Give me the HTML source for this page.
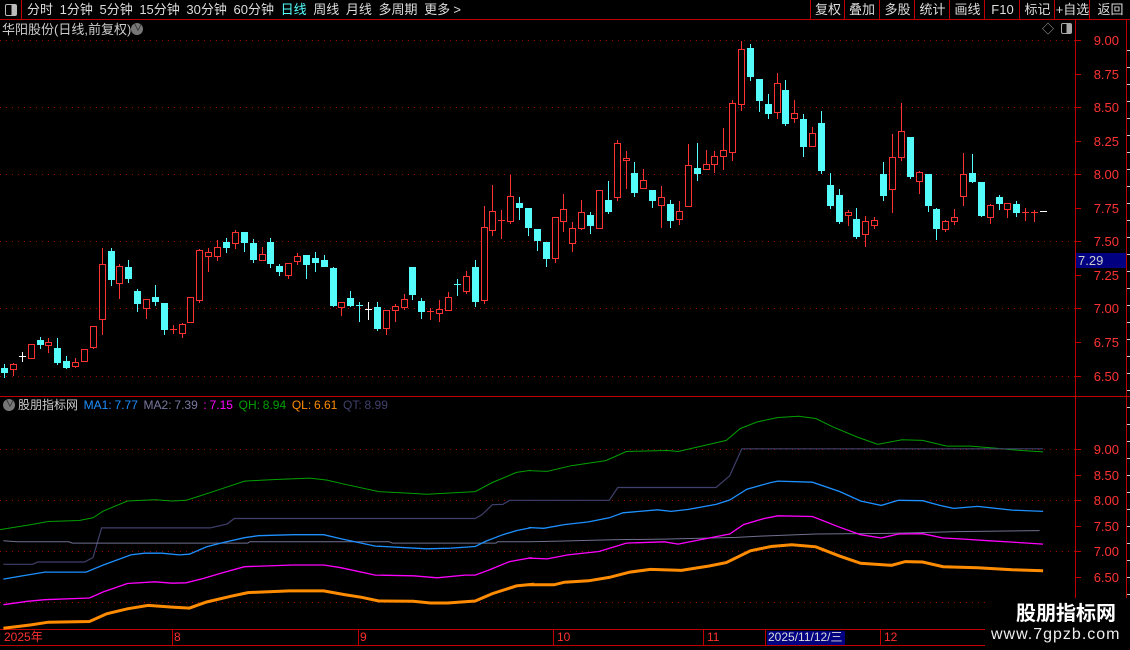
<!DOCTYPE html>
<html><head><meta charset="utf-8">
<style>
html,body{margin:0;padding:0;background:#000;width:1130px;height:650px;overflow:hidden;font-family:"Liberation Sans","Noto Sans CJK SC",sans-serif;}
.t{position:absolute;white-space:nowrap;font-size:13px;line-height:15px;}
#bar{position:absolute;left:0;top:0;width:1130px;height:19px;border-bottom:1px solid #c00000;}
.btn{position:absolute;top:0;height:19px;border-left:1px solid #c00000;color:#ddd;font-size:13px;line-height:19px;text-align:center;}
</style></head><body>
<div id="bar"></div>
<div style="position:absolute;left:0;top:0;width:21px;height:19px;border-right:1px solid #c00000"></div>
<div style="position:absolute;left:5px;top:4px;width:10px;height:10px;border:1px solid #bbb;border-radius:2px;background:linear-gradient(90deg,#000 55%,#bbb 55%)"></div>
<div class="t" style="left:27px;top:2px;color:#ddd;word-spacing:-0.3px">分时&nbsp; 1分钟&nbsp; 5分钟&nbsp; 15分钟&nbsp; 30分钟&nbsp; 60分钟&nbsp; <span style="color:#55ffff">日线</span>&nbsp; 周线&nbsp; 月线&nbsp; 多周期&nbsp; 更多 &gt;</div>
<div class="btn" style="left:810px;width:34px">复权</div>
<div class="btn" style="left:844px;width:34px">叠加</div>
<div class="btn" style="left:879px;width:35px">多股</div>
<div class="btn" style="left:914px;width:35px">统计</div>
<div class="btn" style="left:949px;width:35px">画线</div>
<div class="btn" style="left:984px;width:35px">F10</div>
<div class="btn" style="left:1019px;width:35px">标记</div>
<div class="btn" style="left:1054px;width:35px">+自选</div>
<div class="btn" style="left:1089px;width:41px">返回</div>
<div class="t" style="left:2px;top:22px;color:#ccc">华阳股份(日线,前复权)</div>
<div style="position:absolute;left:131px;top:23px;width:12px;height:12px;border-radius:50%;background:#777"></div>
<div class="t" style="left:133px;top:21px;color:#222;font-size:10px">∨</div>
<div class="t" style="left:1042px;top:22px;color:#aaa;font-size:12px">◇</div>
<div style="position:absolute;left:1061px;top:23px;width:9px;height:9px;border:1px solid #aaa;border-radius:2px;background:linear-gradient(90deg,#000 50%,#aaa 50%)"></div>

<svg id="sv" width="1130" height="650" style="position:absolute;left:0;top:0" xmlns="http://www.w3.org/2000/svg"></svg>

<div style="position:absolute;left:3px;top:399px;width:12px;height:12px;border-radius:50%;background:#777"></div>
<div class="t" style="left:5px;top:397px;color:#222;font-size:10px">∨</div>
<div class="t" style="left:18px;top:398px;color:#ccc;font-size:12px;word-spacing:-0.5px">股朋指标网&nbsp; <span style="color:#1e90ff">MA1: 7.77</span>&nbsp; <span style="color:#7878a0">MA2: 7.39</span>&nbsp; <span style="color:#ff00ff">: 7.15</span>&nbsp; <span style="color:#00a000">QH: 8.94</span>&nbsp; <span style="color:#ff8c00">QL: 6.61</span>&nbsp; <span style="color:#40406c">QT: 8.99</span></div>

<div style="position:absolute;left:1076px;top:253px;width:50px;height:15px;background:#000080"></div>
<div class="t" style="left:1078px;top:253px;color:#ccc;font-size:13px">7.29</div>

<div style="position:absolute;left:767px;top:631px;width:78px;height:14px;background:#000080"></div>
<div class="t" style="left:768px;top:630px;color:#ddd;font-size:12px">2025/11/12/三</div>
<div class="t" style="left:4px;top:630px;color:#ff3030;font-size:12px">2025年</div>
<div class="t" style="left:174px;top:630px;color:#ff3030;font-size:12px">8</div>
<div class="t" style="left:360px;top:630px;color:#ff3030;font-size:12px">9</div>
<div class="t" style="left:557px;top:630px;color:#ff3030;font-size:12px">10</div>
<div class="t" style="left:707px;top:630px;color:#ff3030;font-size:12px">11</div>
<div class="t" style="left:884px;top:630px;color:#ff3030;font-size:12px">12</div>

<div style="position:absolute;left:985px;top:598px;width:145px;height:52px;background:#000"></div>
<div class="t" style="left:1016px;top:602px;color:#fff;font-size:20px;line-height:24px;font-weight:bold">股朋指标网</div>
<div class="t" style="left:991px;top:626px;color:#eee;font-size:16px;line-height:18px;letter-spacing:1px">www.7gpzb.com</div>

<script>
var sv=document.getElementById("sv"),h="";
function ln(x1,y1,x2,y2,c,w,d){h+='<line x1="'+x1+'" y1="'+y1+'" x2="'+x2+'" y2="'+y2+'" stroke="'+c+'" stroke-width="'+(w||1)+'"'+(d?' stroke-dasharray="'+d+'"':'')+'/>';}
function tx(x,y,s,c){h+='<text x="'+x+'" y="'+y+'" fill="'+c+'" font-size="13" font-family="Liberation Sans,sans-serif" text-anchor="end">'+s+'</text>';}
[40,107,174,241,308,376].forEach(function(y){ln(0,y+.5,1075,y+.5,"#a00000",1,"1 5");});
[449,500,551,602].forEach(function(y){ln(0,y+.5,1075,y+.5,"#a00000",1,"1 5");});
var ml=[["9.00",40],["8.75",74],["8.50",107],["8.25",141],["8.00",174],["7.75",208],["7.50",241],["7.25",275],["7.00",308],["6.75",342],["6.50",376]];
ml.forEach(function(a){tx(1119,a[1]+5,a[0],"#ff3333");ln(1076,a[1]+.5,1081,a[1]+.5,"#c00000");});
var ll=[["9.00",449],["8.50",475],["8.00",500],["7.50",526],["7.00",551],["6.50",577],["6.00",602]];
ll.forEach(function(a){tx(1119,a[1]+5,a[0],"#ff3333");ln(1076,a[1]+.5,1081,a[1]+.5,"#c00000");});
for(var y=50;y<620;y+=17){ln(1127,y+.5,1130,y+.5,"#ccc");}
ln(1075.5,20,1075.5,630,"#c00000");ln(1126.5,20,1126.5,650,"#c00000");
ln(0,396.5,1130,396.5,"#c00000");
ln(0,629.5,1130,629.5,"#c00000");ln(0,645.5,1130,645.5,"#c00000");
[172,358,553,703,765,880].forEach(function(x){ln(x+.5,630,x+.5,646,"#c00000");});
var C=[["c",368,372,364,377],["r",364,369,363,375],["w",356,356,352,361],["r",344,358,344,358],["c",340,344,337,348],["r",342,345,338,352],["c",348,362,338,364],["c",361,367,356,368],["r",362,366,358,367],["r",349,361,349,361],["r",326,347,326,348],["r",264,319,248,334],["c",251,279,248,285],["r",266,283,264,298],["c",267,278,260,282],["c",291,303,289,311],["r",299,308,299,318],["c",297,301,285,305],["c",303,329,303,334],["r",329,329,325,333],["r",324,333,323,337],["r",297,322,297,322],["r",250,300,249,302],["r",252,256,248,271],["r",247,256,240,260],["c",242,247,238,252],["r",232,243,230,248],["c",232,242,232,251],["c",243,259,239,262],["r",254,260,247,260],["c",242,263,238,267],["c",266,271,264,275],["r",263,275,263,278],["r",256,261,253,264],["c",255,264,255,278],["c",258,262,252,271],["c",260,266,255,266],["c",268,305,267,306],["r",302,307,302,315],["c",298,305,291,306],["c",305,305,302,321],["w",309,309,302,319],["c",307,328,302,330],["r",310,328,310,334],["r",306,310,304,321],["r",299,307,294,309],["c",267,294,267,299],["c",301,311,298,318],["r",311,311,308,319],["r",309,313,300,321],["r",297,310,292,310],["c",284,284,279,295],["r",276,291,271,293],["c",267,301,260,306],["r",227,300,206,303],["r",211,230,185,235],["r",220,220,210,238],["r",196,221,175,223],["c",203,207,197,219],["c",208,227,208,235],["c",229,240,229,250],["c",242,258,242,266],["r",217,258,217,262],["r",209,221,194,231],["r",228,243,222,251],["r",212,228,200,229],["c",215,225,212,233],["r",190,228,190,228],["c",200,211,181,213],["r",143,197,140,200],["r",158,160,151,188],["c",173,192,162,196],["r",180,188,169,188],["c",190,200,190,207],["r",197,205,186,227],["c",204,220,200,227],["r",211,219,201,224],["r",165,206,144,206],["c",168,173,143,180],["r",164,169,150,169],["r",156,164,151,172],["r",150,156,128,169],["r",103,152,100,160],["r",49,104,41,110],["c",48,76,44,80],["c",79,100,79,111],["c",104,113,94,118],["r",83,112,73,118],["c",90,123,80,125],["r",113,118,100,122],["c",119,146,114,156],["r",133,146,127,146],["c",123,170,111,173],["c",185,205,173,208],["c",195,221,189,223],["r",212,215,210,225],["c",219,236,208,238],["r",221,234,216,246],["r",220,225,217,228],["c",174,195,162,200],["r",157,189,134,212],["r",131,157,103,160],["c",137,176,137,178],["r",172,181,171,193],["c",174,205,174,211],["c",209,228,208,239],["r",221,229,220,231],["r",217,221,209,224],["r",174,196,153,205],["c",173,181,154,182],["c",182,215,182,216],["r",205,217,204,223],["c",197,203,195,209],["r",203,209,203,217],["c",204,212,201,216],["r",212,212,208,220],["r",212,212,210,221],["w",211,211,211,211]];
C.forEach(function(d,i){var x=Math.round(4+8.88*i);var col=d[0]=="r"?"#ff3232":d[0]=="c"?"#54fcfc":"#ffffff";
 if(d[3]<d[1]||d[4]>d[2]) ln(x+.5,d[3],x+.5,d[4]+1,col);
 var hgt=d[2]-d[1];
 if(hgt<2){ln(x-3,d[1]+.5,x+4,d[1]+.5,col,hgt<1?1:2);}
 else if(d[0]=="r"){h+='<rect x="'+(x-2.5)+'" y="'+(d[1]+.5)+'" width="6" height="'+hgt+'" fill="#000" stroke="'+col+'"/>';}
 else{h+='<rect x="'+(x-3)+'" y="'+d[1]+'" width="7" height="'+(hgt+1)+'" fill="'+col+'"/>';}
});
function pl(L,R,c,w){var p=[];L.forEach(function(a){p.push((a[0]/2.904).toFixed(1)+","+(400+a[1]/2.97).toFixed(1));});R.forEach(function(a){p.push((530+a[0]/2.904).toFixed(1)+","+(400+a[1]/2.97).toFixed(1));});h+='<polyline points="'+p.join(" ")+'" fill="none" stroke="'+c+'" stroke-width="'+w+'"/>';}
pl([[0,385],[90,370],[140,361],[230,358],[270,350],[300,330],[370,300],[450,296],[500,300],[540,298],[580,285],[640,265],[710,241],[800,236],[900,232],[950,238],[1000,250],[1100,272],[1170,276],[1240,280],[1380,272],[1430,245],[1500,215],[1540,209]],[[0,210],[50,212],[120,195],[220,180],[280,153],[400,150],[430,153],[520,132],[570,120],[610,85],[660,65],[720,52],[780,48],[830,55],[880,80],[950,110],[1010,132],[1080,118],[1140,120],[1210,137],[1280,137],[1350,143],[1400,148],[1490,154]],"#00a000",1);
pl([[10,488],[95,488],[110,481],[245,481],[270,468],[295,380],[610,380],[660,368],[680,352],[1380,352],[1400,340],[1430,311],[1460,310],[1480,298],[1540,298]],[[0,298],[230,298],[255,260],[540,260],[580,225],[615,145],[1490,145]],"#40406c",1.2);
pl([[10,418],[50,421],[200,421],[210,425],[720,425],[725,421],[1130,421],[1140,425],[1440,425],[1445,421],[1540,421]],[[0,421],[85,419],[240,415],[390,413],[600,408],[680,404],[830,398],[1060,396],[1240,391],[1480,388]],"#707090",1);
pl([[10,532],[60,523],[130,511],[250,511],[300,490],[380,460],[420,455],[470,455],[520,460],[550,458],[600,436],[650,423],[710,409],[750,403],[850,400],[940,400],[990,412],[1090,434],[1240,442],[1310,440],[1380,435],[1410,420],[1460,400],[1500,388],[1540,380]],[[0,379],[40,381],[100,370],[170,362],[230,350],[270,335],[370,326],[410,331],[460,325],[540,310],[580,297],[630,265],[700,245],[720,241],[820,244],[900,272],[960,300],[1020,313],[1070,298],[1140,299],[1190,313],[1230,322],[1300,316],[1400,327],[1490,331]],"#1e90ff",1.3);
pl([[10,608],[80,598],[130,593],[260,588],[300,570],[370,545],[450,540],[500,544],[540,543],[590,530],[640,515],[710,495],[850,490],[940,490],[990,498],[1090,520],[1200,522],[1270,528],[1350,520],[1380,520],[1420,505],[1480,480],[1540,469]],[[0,470],[50,472],[110,460],[200,450],[280,425],[390,421],[430,428],[520,410],[580,398],[620,370],[680,352],[720,344],[820,346],[900,378],[960,400],[1020,410],[1070,398],[1140,397],[1200,410],[1260,413],[1330,418],[1400,422],[1490,428]],"#ff00ff",1.3);
pl([[10,678],[90,668],[140,660],[260,658],[310,635],[370,620],[430,610],[500,615],[550,618],[600,600],[670,583],[720,572],[840,567],[940,567],[1000,578],[1050,586],[1100,597],[1200,598],[1250,603],[1300,603],[1380,597],[1430,575],[1500,552],[1540,548]],[[0,549],[70,549],[100,541],[170,537],[230,527],[290,511],[350,503],[440,506],[520,493],[570,483],[640,448],[700,435],[760,430],[830,436],[900,464],[960,485],[1050,491],[1090,480],[1140,481],[1200,495],[1300,498],[1400,504],[1490,507]],"#ff8c00",3);
sv.innerHTML=h;
</script>
</body></html>
